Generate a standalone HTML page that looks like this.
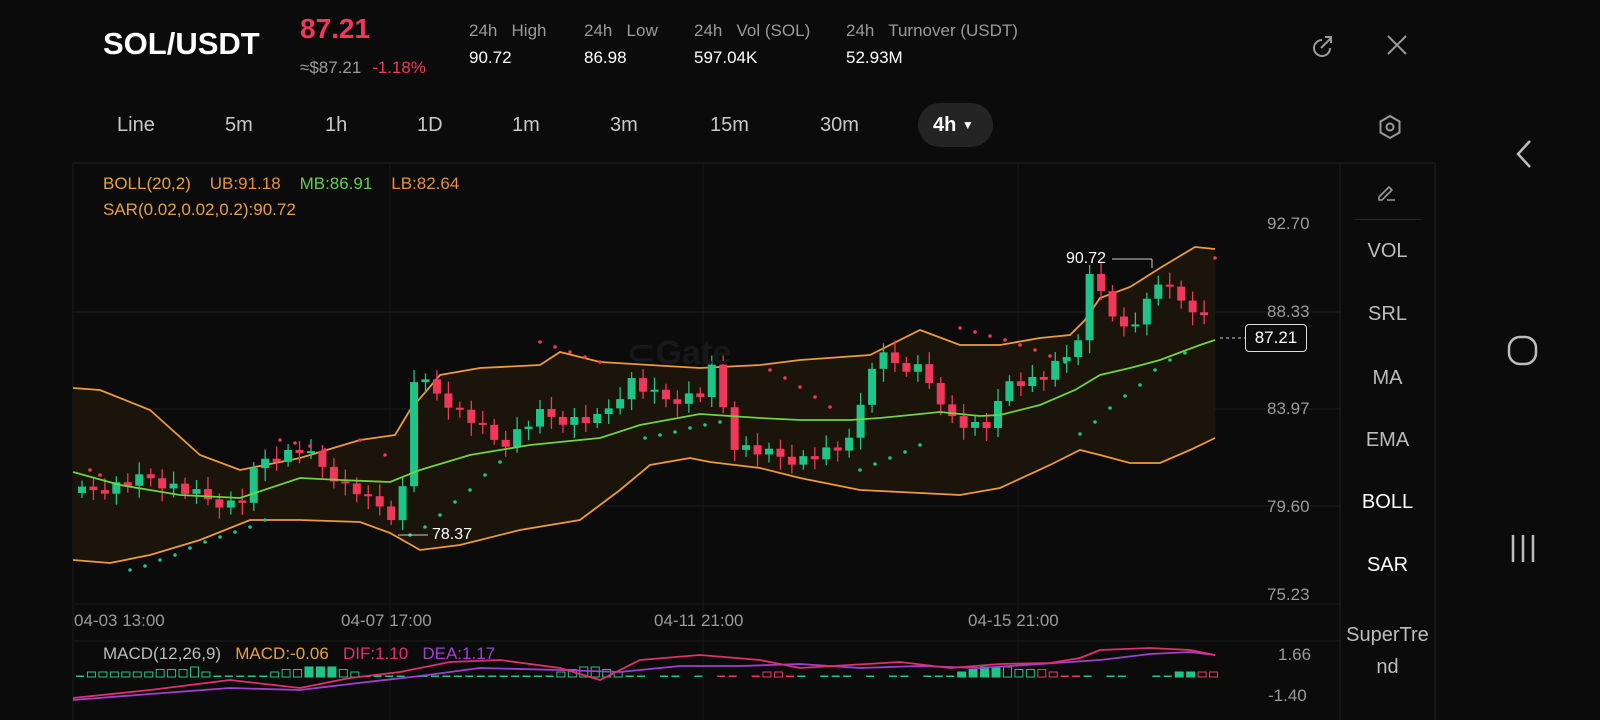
<!DOCTYPE html>
<html><head><meta charset="utf-8">
<style>
body{margin:0;width:1600px;height:720px;background:#0b0b0b;overflow:hidden;font-family:"Liberation Sans",sans-serif;color:#fff;position:relative}
.a{position:absolute;white-space:nowrap}
.g{color:#9a9a9a}
.tf{position:absolute;top:114px;font-size:20px;color:#c8c8c8}
.side{position:absolute;left:1340px;width:95px;text-align:center;font-size:20px;color:#bdbdbd}
</style></head><body>
<div class="a" style="left:103px;top:26px;font-size:31px;font-weight:bold">SOL/USDT</div>
<div class="a" style="left:300px;top:13px;font-size:28px;font-weight:bold;color:#f0385a">87.21</div>
<div class="a g" style="left:300px;top:58px;font-size:17px">≈$87.21 <span style="color:#f0385a;margin-left:6px">-1.18%</span></div>
<div class="a g" style="left:469px;top:21px;font-size:17px">24h&nbsp;&nbsp; High</div>
<div class="a" style="left:469px;top:48px;font-size:17px">90.72</div>
<div class="a g" style="left:584px;top:21px;font-size:17px">24h&nbsp;&nbsp; Low</div>
<div class="a" style="left:584px;top:48px;font-size:17px">86.98</div>
<div class="a g" style="left:694px;top:21px;font-size:17px">24h&nbsp;&nbsp; Vol (SOL)</div>
<div class="a" style="left:694px;top:48px;font-size:17px">597.04K</div>
<div class="a g" style="left:846px;top:21px;font-size:17px">24h&nbsp;&nbsp; Turnover (USDT)</div>
<div class="a" style="left:846px;top:48px;font-size:17px">52.93M</div>
<svg class="a" style="left:1308px;top:31px" width="30" height="30" viewBox="0 0 30 30" fill="none" stroke="#9a9a9a" stroke-width="2"><path d="M22 17a8 8 0 1 1-8-8"/><path d="M13 17 23 7M17 6h6v6"/></svg>
<svg class="a" style="left:1384px;top:32px" width="26" height="26" viewBox="0 0 26 26" stroke="#9a9a9a" stroke-width="2"><path d="M4 4 22 22M22 4 4 22"/></svg>
<div class="tf" style="left:117px">Line</div><div class="tf" style="left:225px">5m</div><div class="tf" style="left:325px">1h</div><div class="tf" style="left:417px">1D</div><div class="tf" style="left:512px">1m</div><div class="tf" style="left:610px">3m</div><div class="tf" style="left:710px">15m</div><div class="tf" style="left:820px">30m</div>
<div class="a" style="left:918px;top:103px;width:75px;height:44px;border-radius:22px;background:#242424"></div>
<div class="tf" style="left:933px;color:#fff;font-weight:bold">4h <span style="font-size:12px;vertical-align:2px">▼</span></div>
<svg class="a" style="left:1376px;top:113px" width="28" height="28" viewBox="0 0 28 28" fill="none" stroke="#9a9a9a" stroke-width="2"><path d="M14 3 23.5 8.5v11L14 25 4.5 19.5v-11z"/><circle cx="14" cy="14" r="3.5"/></svg>
<svg class="a" style="left:1510px;top:138px" width="30" height="32" stroke="#bdbdbd" stroke-width="2.5" fill="none"><path d="M20 3 8 16l12 13"/></svg>
<svg class="a" style="left:1506px;top:334px" width="34" height="34" stroke="#bdbdbd" stroke-width="2.5" fill="none"><rect x="3" y="3" width="27" height="27" rx="11"/></svg>
<svg class="a" style="left:1508px;top:532px" width="32" height="32" stroke="#bdbdbd" stroke-width="2.5"><path d="M5 3v27M15 3v27M25 3v27"/></svg>

<svg id="ch" class="a" style="left:0;top:0" width="1600" height="720"></svg>

<div class="a" style="left:103px;top:174px;font-size:17px;color:#e9a13b">BOLL(20,2)&nbsp;&nbsp;&nbsp; <span style="color:#e98e3b">UB:91.18</span>&nbsp;&nbsp;&nbsp; <span style="color:#5fd34b">MB:86.91</span>&nbsp;&nbsp;&nbsp; <span style="color:#e98e3b">LB:82.64</span></div>
<div class="a" style="left:103px;top:200px;font-size:17px;color:#e9a13b">SAR(0.02,0.02,0.2):90.72</div>
<div class="a g" style="left:1267px;top:214px;font-size:17px">92.70</div>
<div class="a g" style="left:1267px;top:302px;font-size:17px">88.33</div>
<div class="a g" style="left:1267px;top:399px;font-size:17px">83.97</div>
<div class="a g" style="left:1267px;top:497px;font-size:17px">79.60</div>
<div class="a g" style="left:1267px;top:585px;font-size:17px">75.23</div>
<div class="a g" style="left:74px;top:611px;font-size:17px">04-03 13:00</div>
<div class="a g" style="left:341px;top:611px;font-size:17px">04-07 17:00</div>
<div class="a g" style="left:654px;top:611px;font-size:17px">04-11 21:00</div>
<div class="a g" style="left:968px;top:611px;font-size:17px">04-15 21:00</div>
<div class="a" style="left:103px;top:644px;font-size:17px;color:#bbb">MACD(12,26,9)&nbsp;&nbsp; <span style="color:#e9a13b">MACD:-0.06</span>&nbsp;&nbsp; <span style="color:#e0306e">DIF:1.10</span>&nbsp;&nbsp; <span style="color:#a040d0">DEA:1.17</span></div>
<div class="a g" style="left:1278px;top:645px;font-size:17px">1.66</div>
<div class="a g" style="left:1268px;top:686px;font-size:17px">-1.40</div>
<div class="a" style="left:1066px;top:250px;font-size:16px">90.72</div>
<div class="a" style="left:432px;top:526px;font-size:16px">78.37</div>
<div class="a" style="left:1245px;top:324px;width:60px;height:26px;border:1px solid #ddd;border-radius:4px;background:#0b0b0b;font-size:17px;text-align:center;line-height:26px">87.21</div>
<div class="a" style="left:627px;top:333px;font-size:34px;font-weight:bold;color:#181818">⊂Gate</div>

<svg class="a" style="left:1375px;top:180px" width="24" height="24" fill="none" stroke="#9a9a9a" stroke-width="1.6"><path d="M4 17 14 7l3 3-10 10H4zM12 20h8"/></svg>
<div class="a" style="left:1355px;top:219px;width:66px;height:1px;background:#2a2a2a"></div>
<div class="side" style="top:240px">VOL</div>
<div class="side" style="top:303px">SRL</div>
<div class="side" style="top:367px">MA</div>
<div class="side" style="top:429px">EMA</div>
<div class="side" style="top:491px;color:#fff">BOLL</div>
<div class="side" style="top:554px;color:#fff">SAR</div>
<div class="side" style="top:619px;line-height:32px">SuperTre<br>nd</div>

<script>
const s=document.getElementById('ch');let h='';
const L=(x1,y1,x2,y2,c,w)=>h+=`<line x1="${x1}" y1="${y1}" x2="${x2}" y2="${y2}" stroke="${c}" stroke-width="${w||1}"/>`;
L(73,163,1435,163,'#222');L(1340,163,1340,720,'#222');L(1435,163,1435,720,'#222');
L(73,163,73,720,'#1c1c1c');
[312,409,506,604,641].forEach(y=>L(73,y,1340,y,'#1c1c1c'));
[390,703,1018].forEach(x=>L(x,163,x,720,'#1a1a1a'));
const P=a=>a.map((v,i)=>(i%2?'':(i?'L':'M'))+v).join(' ');
const up=[73,388,100,390,150,410,200,455,240,470,300,458,360,440,395,435,410,410,440,375,480,368,540,365,560,352,600,362,700,368,760,365,800,360,870,355,920,330,960,345,1000,345,1040,338,1070,335,1085,320,1100,298,1130,287,1160,268,1195,247,1215,249];
const lo=[73,560,110,563,150,555,200,540,250,520,300,520,360,522,390,533,420,550,460,545,520,530,580,520,620,490,650,465,690,458,710,462,760,468,800,478,860,490,900,492,960,495,1000,488,1050,465,1080,450,1100,455,1130,463,1160,463,1190,450,1215,438];
const mid=[73,472,120,485,180,495,240,498,300,478,340,480,390,482,420,470,470,455,530,445,600,438,640,425,700,414,760,418,800,420,850,420,880,418,940,412,980,416,1000,415,1040,405,1075,390,1100,375,1130,368,1160,360,1200,345,1215,340];
let rl=[];for(let i=lo.length-2;i>=0;i-=2)rl.push(lo[i],lo[i+1]);
h+=`<path d="${P(up)} ${P(rl).replace('M','L')}Z" fill="#1a140b"/>`;
h+=`<path d="${P(up)}" fill="none" stroke="#ef9a3a" stroke-width="1.8"/>`;
h+=`<path d="${P(lo)}" fill="none" stroke="#ef9a3a" stroke-width="1.8"/>`;
const pth=[80,493,150,478,210,500,240,505,260,460,300,450,340,480,370,500,400,520,412,378,425,385,460,410,500,445,540,415,570,420,600,420,630,380,660,400,700,395,710,365,735,445,770,455,800,460,840,450,860,410,875,355,900,365,925,368,940,410,970,425,990,425,1010,380,1040,380,1075,350,1090,275,1100,285,1115,330,1140,320,1155,280,1165,285,1180,300,1200,310,1215,340];
const yAt=x=>{for(let i=0;i<pth.length-2;i+=2){if(x<=pth[i+2]){const t=(x-pth[i])/(pth[i+2]-pth[i]);return pth[i+1]+t*(pth[i+3]-pth[i+1]);}}return 340};
let prev=yAt(80),k=0;
for(let x=82;x<=1215;x+=11.45){let c=yAt(x)+((k*7)%5-2)*3;let o=prev;if(Math.abs(c-o)<2)c=o+((k%2)?2:-2);
const col=c<o?'#1fc488':'#f0385a';const t=Math.min(o,c),b=Math.max(o,c);
L(x,t-6-(k*3)%9,x,b+5+(k*5)%9,col,1.3);h+=`<rect x="${x-4}" y="${t}" width="8" height="${Math.max(b-t,1.5)}" fill="${col}"/>`;prev=c;k++;}
h+=`<path d="${P(mid)}" fill="none" stroke="#6ed43f" stroke-width="1.8"/>`;
const sar=[[90,470],[100,475],[130,570],[145,566],[160,560],[175,555],[190,548],[205,542],[220,537],[235,532],[250,527],[265,520],[280,440],[295,443],[310,446],[325,450],[360,440],[385,455],[410,535],[425,527],[440,515],[455,502],[470,490],[485,475],[500,462],[540,342],[555,347],[570,352],[585,357],[600,362],[645,438],[660,435],[675,432],[690,428],[705,425],[720,422],[770,370],[785,378],[800,387],[815,397],[830,407],[860,470],[875,464],[890,458],[905,452],[920,445],[960,328],[975,332],[990,336],[1005,340],[1020,345],[1035,350],[1050,356],[1065,362],[1080,434],[1095,422],[1110,408],[1125,396],[1140,385],[1155,370],[1170,360],[1185,353],[1215,258]];
sar.forEach(([x,y])=>h+=`<circle cx="${x}" cy="${y}" r="1.8" fill="${y<yAt(x)?'#f0385a':'#1fc488'}"/>`);
L(1112,259,1152,259,'#ccc');L(1152,259,1152,268,'#ccc');L(398,535,428,535,'#ccc');
h+=`<line x1="1220" y1="338" x2="1245" y2="338" stroke="#ccc" stroke-dasharray="3 3"/>`;
const dif=[73,698,150,690,230,680,300,688,350,678,400,672,450,662,500,660,560,668,600,680,640,660,700,655,760,660,800,668,850,665,900,662,950,668,1000,664,1050,663,1080,658,1100,650,1150,648,1190,650,1215,655];
const dea=[73,700,150,694,230,688,300,690,350,684,420,676,480,668,560,670,620,672,680,666,740,666,800,664,860,668,920,666,980,668,1040,664,1100,660,1150,654,1190,652,1215,655];
const hh=[1,2,2,2,2,2,2,3,3,3,4,2,1,1,1,1,1,2,3,3,4,4,4,3,2,1,1,1,1,0,1,1,1,1,1,1,1,1,1,1,1,1,2,3,4,4,3,2,1,1,0,1,1,0,1,0,1,1,0,1,2,2,1,1,0,1,1,1,0,1,0,1,1,0,1,1,1,2,3,4,4,4,3,3,3,2,1,1,1,0,1,1,0,0,1];
let j=0;for(let x=80;x<1215;x+=11.45,j++){const v=hh[j%hh.length];if(!v){j;continue;}const hg=v<=1?1.5:v*2.5;
const col=(x>720&&x<800)||(x>1040&&x<1080)||x>1200?'#f0385a':'#1fc488';const fill=(x>300&&x<340)||(x>890&&x<1000)||(x>1110&&x<1200);
h+=`<rect x="${x-4}" y="${677-hg}" width="8" height="${hg}" fill="${fill||v<=1?col:'none'}" stroke="${col}" stroke-width="${v<=1?0:1}"/>`;}
h+=`<path d="${P(dea)}" fill="none" stroke="#a040d0" stroke-width="1.8"/><path d="${P(dif)}" fill="none" stroke="#e0306e" stroke-width="1.8"/>`;
s.innerHTML=h;
</script>
</body></html>
